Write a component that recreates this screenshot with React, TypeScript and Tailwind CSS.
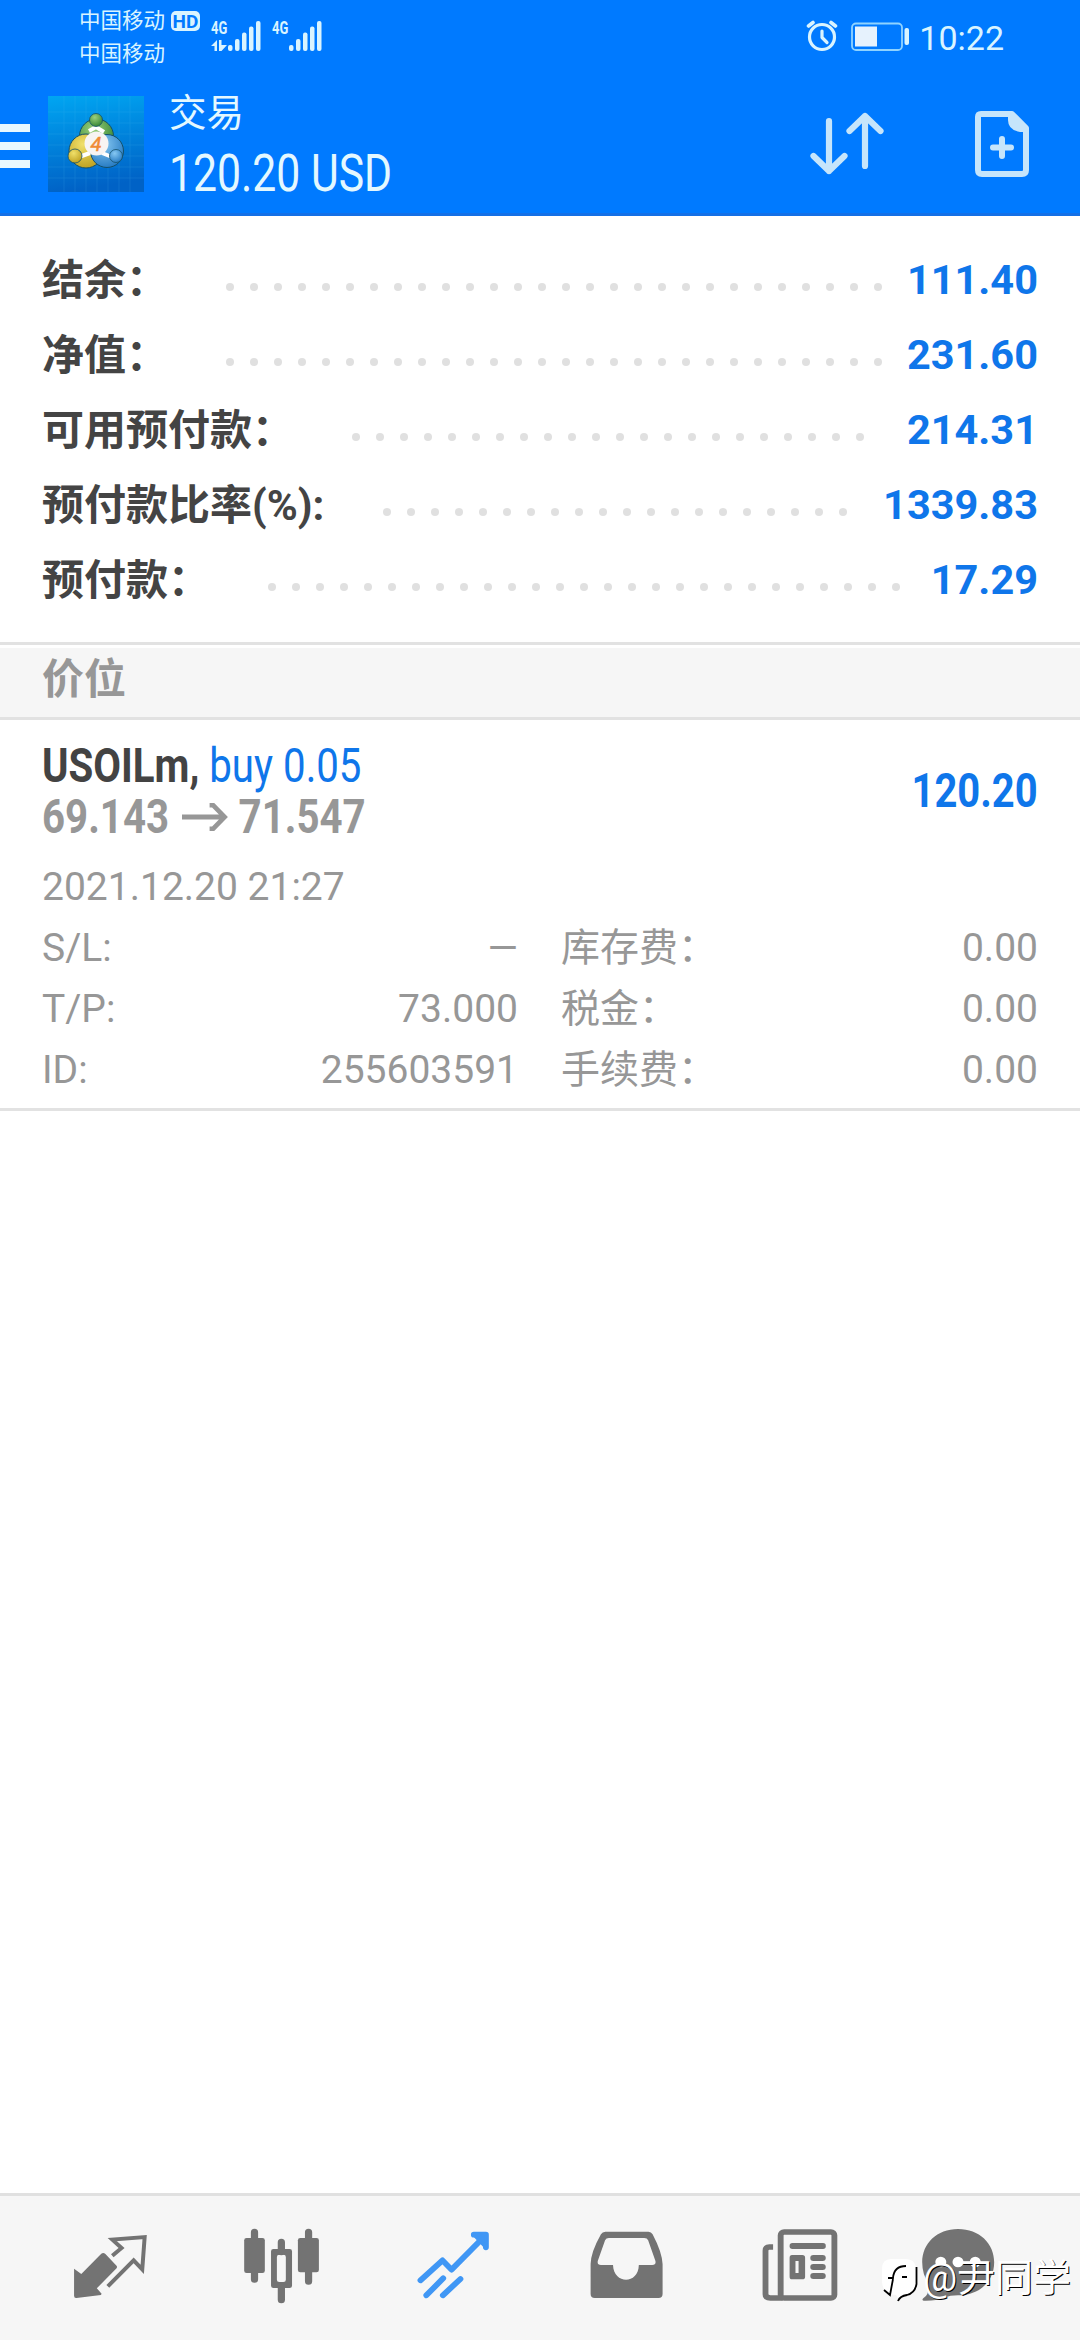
import React from 'react';

interface SummaryRow {
    label: string;
    value: string;
    labelWidth: string;
    dots: number;
}

const summary: SummaryRow[] = [
    { label: '结余：', value: '111.40', labelWidth: 'w-[184px]', dots: 28 },
    { label: '净值：', value: '231.60', labelWidth: 'w-[184px]', dots: 28 },
    { label: '可用预付款：', value: '214.31', labelWidth: 'w-[310px]', dots: 22 },
    { label: '预付款比率(%):', value: '1339.83', labelWidth: 'w-[341px]', dots: 20 },
    { label: '预付款：', value: '17.29', labelWidth: 'w-[226px]', dots: 27 },
];

const details = [
    { label: 'S/L:', value: '—', feeLabel: '库存费：', fee: '0.00' },
    { label: 'T/P:', value: '73.000', feeLabel: '税金：', fee: '0.00' },
    { label: 'ID:', value: '255603591', feeLabel: '手续费：', fee: '0.00' },
];

const SignalBars = () => (
    <svg width="36" height="32" viewBox="0 0 36 32" fill="#d9f4ff">
        <rect x="1" y="25" width="4.5" height="6" rx="2" />
        <rect x="8" y="19" width="4.5" height="12" rx="2" />
        <rect x="15" y="12.500" width="4.5" height="18.500" rx="2" />
        <rect x="22" y="6.5" width="4.5" height="24.5" rx="2" />
        <rect x="29" y="1" width="4.5" height="30" rx="2" />
    </svg>
);

const StatusBar = () => (
    <div className="flex h-[72px] items-start text-[#d9f4ff]">
        <div className="ml-[79px] w-[92px] pt-1 text-[21.5px] leading-[33px]">
            <p>中国移动</p>
            <p>中国移动</p>
        </div>
        <div className="mt-[11px] flex h-[20px] w-[29px] items-center justify-center rounded-[5px] bg-[#d9f4ff] text-[19px] font-bold leading-none text-[#007aff]">
            HD
        </div>
        <div className="ml-[11px] mt-[19px] w-[17px] text-[18px] font-bold leading-[18px]">
            <p className="origin-left scale-x-[0.72]">4G</p>
            <svg className="mt-[3px]" width="17" height="11" viewBox="0 0 17 11" fill="#d9f4ff">
                <path d="M0 6 L6 0 V11 H3.500 V6 Z M8 0 H10.500 V5 H16 L10.500 11 H8 Z" />
            </svg>
        </div>
        <div className="-ml-px mt-5">
            <SignalBars />
        </div>
        <p className="ml-[9px] mt-[19px] w-[17px] origin-left scale-x-[0.72] text-[18px] font-bold leading-[18px]">4G</p>
        <div className="-ml-px mt-5">
            <SignalBars />
        </div>
        <svg className="ml-auto mt-5" width="32" height="32" viewBox="0 0 32 32" fill="none" stroke="#d9f4ff" strokeWidth="3.2" strokeLinecap="round" strokeLinejoin="round">
            <circle cx="16" cy="17" r="12.500" />
            <path d="M16 11 V17.500 L21 22.500" />
            <path d="M2.500 6 L7 2.500 M29.500 6 L25 2.500" strokeWidth="3.600" />
        </svg>
        <svg className="ml-[13px] mt-[22px]" width="60" height="30" viewBox="0 0 60 30">
            <rect x="1" y="1.500" width="50" height="26.500" rx="4" fill="none" stroke="#8fd3ff" strokeWidth="1.800" />
            <rect x="4" y="4.500" width="22" height="20" fill="#e6f2fd" />
            <rect x="53.500" y="6" width="4.500" height="17" rx="2" fill="#d9f4ff" />
        </svg>
        <p className="ml-2 mr-[76px] mt-[17px] text-[34px] leading-[42px]">10:22</p>
    </div>
);

const AppLogo = () => (
    <svg className="ml-[18px] mt-6" width="96" height="96" viewBox="0 0 96 96">
        <defs>
            <linearGradient id="sky" x1="0" y1="0" x2="0.15" y2="1">
                <stop offset="0" stopColor="#00a6f2" />
                <stop offset="0.5" stopColor="#0083dc" />
                <stop offset="1" stopColor="#0062c6" />
            </linearGradient>
            <radialGradient id="green" cx="0.4" cy="0.3" r="0.8">
                <stop offset="0" stopColor="#9bd07c" />
                <stop offset="1" stopColor="#2a7d2c" />
            </radialGradient>
            <radialGradient id="yellow" cx="0.4" cy="0.3" r="0.8">
                <stop offset="0" stopColor="#f0e06a" />
                <stop offset="1" stopColor="#b99a18" />
            </radialGradient>
            <radialGradient id="blue" cx="0.4" cy="0.3" r="0.8">
                <stop offset="0" stopColor="#86c8f2" />
                <stop offset="1" stopColor="#1c72bd" />
            </radialGradient>
        </defs>
        <rect width="96" height="96" fill="url(#sky)" />
        <path d="M16 0V96M27 0V96M38 0V96M49 0V96M60 0V96M71 0V96M82 0V96M0 16H96M0 27H96M0 38H96M0 49H96M0 60H96M0 71H96M0 82H96" stroke="#5cc4f5" strokeWidth="0.8" opacity="0.18" />
        <g stroke="#14506a" strokeWidth="1">
            <circle cx="48.500" cy="40" r="17" fill="url(#green)" />
            <circle cx="38" cy="55" r="17" fill="url(#yellow)" />
            <circle cx="59" cy="55" r="16.500" fill="url(#blue)" />
        </g>
        <path d="M41 35 L48 31 L56 36 M31 61 L42 57 M64 61 L54 57" stroke="#fff" strokeWidth="4" fill="none" />
        <g stroke="#14506a" strokeWidth="0.8">
            <circle cx="48" cy="24" r="6.500" fill="url(#green)" />
            <circle cx="27" cy="60" r="7" fill="url(#yellow)" />
            <circle cx="68" cy="60" r="6.500" fill="url(#blue)" />
        </g>
        <circle cx="48.500" cy="47.500" r="12" fill="#f7f4f2" />
        <text x="48" y="54.500" textAnchor="middle" fontFamily="Roboto, sans-serif" fontSize="20" fontStyle="italic" fill="#f08a35" stroke="#f08a35" strokeWidth="0.5">4</text>
    </svg>
);

const Header = () => (
    <header className="h-[216px] border-b-[3px] border-[#1470e6] bg-[#007aff]">
        <StatusBar />
        <div className="flex items-start">
            <div className="mt-[52px] flex w-[30px] flex-col gap-[10px]">
                <span className="h-2 bg-[#e8f8ff]" />
                <span className="h-2 bg-[#e8f8ff]" />
                <span className="h-2 bg-[#e8f8ff]" />
            </div>
            <AppLogo />
            <div className="ml-[25px] mt-5 text-[#e4f8ff]">
                <p className="text-[37.5px] leading-[42px]">交易</p>
                <p className="mt-3 origin-left scale-x-[0.838] whitespace-nowrap text-[51px] leading-[56px]">120.20 USD</p>
            </div>
            <svg className="ml-auto mt-9" width="80" height="72" viewBox="0 0 80 72" fill="none" stroke="#c6e5fb" strokeWidth="6.200" strokeLinecap="round" strokeLinejoin="round">
                <path d="M22 13 V63 M6.500 48 L22 63 L37.500 48" />
                <path d="M58 58 V8 M42.500 23 L58 8 L73.500 23" />
            </svg>
            <svg className="ml-[87px] mr-[49px] mt-[38px]" width="57" height="68" viewBox="0 0 57 68">
                <path d="M7 4 H38 L52 18 V60 Q52 64 48 64 H8 Q4 64 4 60 V7 Q4 4 7 4 Z" fill="none" stroke="#c6e5fb" strokeWidth="6" strokeLinejoin="round" />
                <path d="M34 3 H40 L54 17 V22 H46 Q34 20 34 10 Z" fill="#c6e5fb" />
                <path d="M28 29 V46 M19 37.500 H37" stroke="#c6e5fb" strokeWidth="6" strokeLinecap="round" />
            </svg>
        </div>
    </header>
);

const Summary = () => (
    <section className="h-[426px] px-[42px] pt-[26px] text-[42px] font-bold leading-[75px]">
        {summary.map((row) => (
            <div key={row.label} className="flex items-center">
                <p className={`${row.labelWidth} h-[75px] shrink-0 whitespace-nowrap pt-px text-[#444]`}>{row.label}</p>
                <div className="mt-[15px] flex gap-4">
                    {Array.from({ length: row.dots }, (_, i) => (
                        <span key={i} className="size-2 rounded-full bg-[#e0e0e0]" />
                    ))}
                </div>
                <p className="ml-auto text-[41.5px] text-[#0f76ea]">{row.value}</p>
            </div>
        ))}
    </section>
);

const Position = () => (
    <section className="h-[391px] border-b-[3px] border-[#e2e2e2] px-[42px] text-[#979797]">
        <div className="flex justify-between pt-5">
            <div className="origin-left scale-x-[0.838] whitespace-nowrap text-[48px] font-bold leading-[51px]">
                <p>
                    <span className="text-[#434343]">USOILm, </span>
                    <span className="font-normal text-[#0f76ea]">buy 0.05</span>
                </p>
                <p className="flex items-center">
                    69.143
                    <svg className="ml-[15px] mr-[13px]" width="55" height="28" viewBox="0 0 55 28" fill="none" stroke="#979797" strokeWidth="5">
                        <path d="M0 14 H51 M33 2 L37 2 L51 14 L37 26 L33 26" />
                    </svg>
                    71.547
                </p>
            </div>
            <p className="mt-[25px] origin-right scale-x-[0.832] text-[48px] font-bold leading-[52px] text-[#0f76ea]">120.20</p>
        </div>
        <div className="text-[39px] leading-[61px]">
            <p className="mt-[15px]">2021.12.20 21:27</p>
            {details.map((d) => (
                <div key={d.label} className="flex">
                    <p className="w-[200px]">{d.label}</p>
                    <p className="w-[276px] text-right">{d.value}</p>
                    <p className="ml-[43px]">{d.feeLabel}</p>
                    <p className="ml-auto">{d.fee}</p>
                </div>
            ))}
        </div>
    </section>
);

const NavIcon = ({ viewBox, className = '', children }: { viewBox: string; className?: string; children: React.ReactNode }) => (
    <svg className={className} width="76" height="80" viewBox={viewBox} preserveAspectRatio="none" fill="#737373">
        {children}
    </svg>
);

const BottomNav = () => (
    <nav className="relative flex h-[147px] gap-24 border-t-[3px] border-[#e0e0e0] bg-[#f6f6f6] pl-[72px] pt-[29px]">
        <NavIcon viewBox="209 135 220.700 240">
            <path d="M215 266 L236 282 L294 221 Q300 216 306 222 L339 258 Q341 262 337 266 L281 325 L295 341 L293 345 L222 354 Q215 355 215 347 Z" />
            <path d="M326 227 L353 204 L326 179 L420 171 L413 268 L388 241 L313 319" fill="none" stroke="#737373" strokeWidth="11.500" />
        </NavIcon>
        <NavIcon viewBox="708.500 135 220.700 240">
            <path d="M739 157 V298 M896 157 V304 M817 187 V215 M817 318 V359" stroke="#737373" strokeWidth="21" strokeLinecap="round" />
            <rect x="709" y="174" width="60" height="105" rx="7" />
            <rect x="865" y="174" width="61" height="103" rx="7" />
            <path fillRule="evenodd" d="M794 207 H841 Q848 207 848 214 V317 Q848 324 841 324 H794 Q787 324 787 317 V214 Q787 207 794 207 Z M811 224 Q804 224 804 231 V299 Q804 306 811 306 H823 Q830 306 830 299 V231 Q830 224 823 224 Z" />
        </NavIcon>
        <NavIcon viewBox="1208 135 220.700 240">
            <g fill="none" stroke="#4097f5" strokeWidth="17" strokeLinecap="round" strokeLinejoin="round">
                <path d="M1221 301 L1285 241 L1311 269 L1410 166 M1376 164 H1411 V202" />
                <path d="M1376 164 H1411 V202 Z" fill="#4097f5" strokeWidth="10" />
                <path d="M1238 346 L1287 295 M1286 346 L1337 297" />
            </g>
        </NavIcon>
        <NavIcon viewBox="139.400 135 220.700 240">
            <path fillRule="evenodd" d="M190 155 H315 Q323 155 327 163 Q354 216 356 252 V342 Q356 354 344 354 H159 Q147 354 147 342 V252 Q148 216 177 163 Q181 155 190 155 Z M200 174 Q192 174 189 181 L168 242 Q165 255 177 255 H212 C214 314 286 314 287 255 H326 Q338 255 335 242 L314 181 Q311 174 303 174 Z" />
        </NavIcon>
        <NavIcon viewBox="639 135 220.700 240" className="overflow-visible">
            <rect x="699" y="156" width="156" height="198" rx="10" fill="none" stroke="#737373" strokeWidth="17" />
            <path d="M677 201 H666 Q655 201 655 212 V343 Q655 354 669 354 H705" fill="none" stroke="#737373" strokeWidth="17" />
            <rect x="725" y="189" width="105" height="18" rx="8" />
            <path fillRule="evenodd" d="M732 225 H762 Q770 225 770 233 V290 Q770 298 762 298 H732 Q725 298 725 290 V233 Q725 225 732 225 Z M742 243 V279 H751 V243 Z" />
            <rect x="785" y="225" width="45" height="18" rx="9" />
            <rect x="785" y="252" width="45" height="18" rx="9" />
            <rect x="785" y="279" width="45" height="18" rx="9" />
        </NavIcon>
        <NavIcon viewBox="1102.600 135 220.700 240" className="-ml-[12px]">
            <path d="M1213 147 C1275 147 1318 190 1318 247 C1318 305 1275 346 1213 346 Q1190 346 1172 353 Q1150 363 1113 362 Q1107 361 1112 355 Q1130 345 1128 310 Q1109 285 1109 247 C1109 190 1152 147 1213 147 Z" />
            <circle cx="1163" cy="246" r="16" fill="#fff" />
            <circle cx="1213" cy="246" r="16" fill="#fff" />
            <circle cx="1263" cy="246" r="16" fill="#fff" />
        </NavIcon>
        {/* author tag over the last icon */}
        <div className="absolute right-[9px] top-[58px] flex items-center text-white">
            <svg width="44" height="48" viewBox="0 0 44 48">
                <path d="M12 5 H26 Q37 5 37 16 V29 Q37 38 28 40 Q23 41 20 46 L17 41 Q4 41 3 28 V15 Q3 5 12 5 Z" fill="#fff" />
                <path d="M37.500 13 V30 Q36 39 28 41 Q21 42 19 47" fill="none" stroke="#000" strokeWidth="1.800" />
                <path d="M9 24 H14 Q15 12 27 12 M23 23 H28 M14 25 L11 41 L5 36" fill="none" stroke="#000" strokeWidth="1.800" />
            </svg>
            <p className="text-[38px] leading-[48px] [text-shadow:1px_1px_0.5px_#000]">@尹同学</p>
        </div>
    </nav>
);

export default function App() {
    return (
        <div className="flex h-[2340px] w-[1080px] flex-col overflow-hidden bg-white font-['Roboto','Noto_Sans_CJK_SC',sans-serif]">
            <Header />
            <Summary />
            <div className="h-[78px] border-y-[3px] border-[#e2e2e2] bg-white pt-[3px]">
                <h2 className="h-[69px] bg-[#f6f6f6] px-[42px] text-[42px] font-bold leading-[63px] text-[#979797]">价位</h2>
            </div>
            <Position />
            <main className="flex-1" />
            <BottomNav />
        </div>
    );
}
